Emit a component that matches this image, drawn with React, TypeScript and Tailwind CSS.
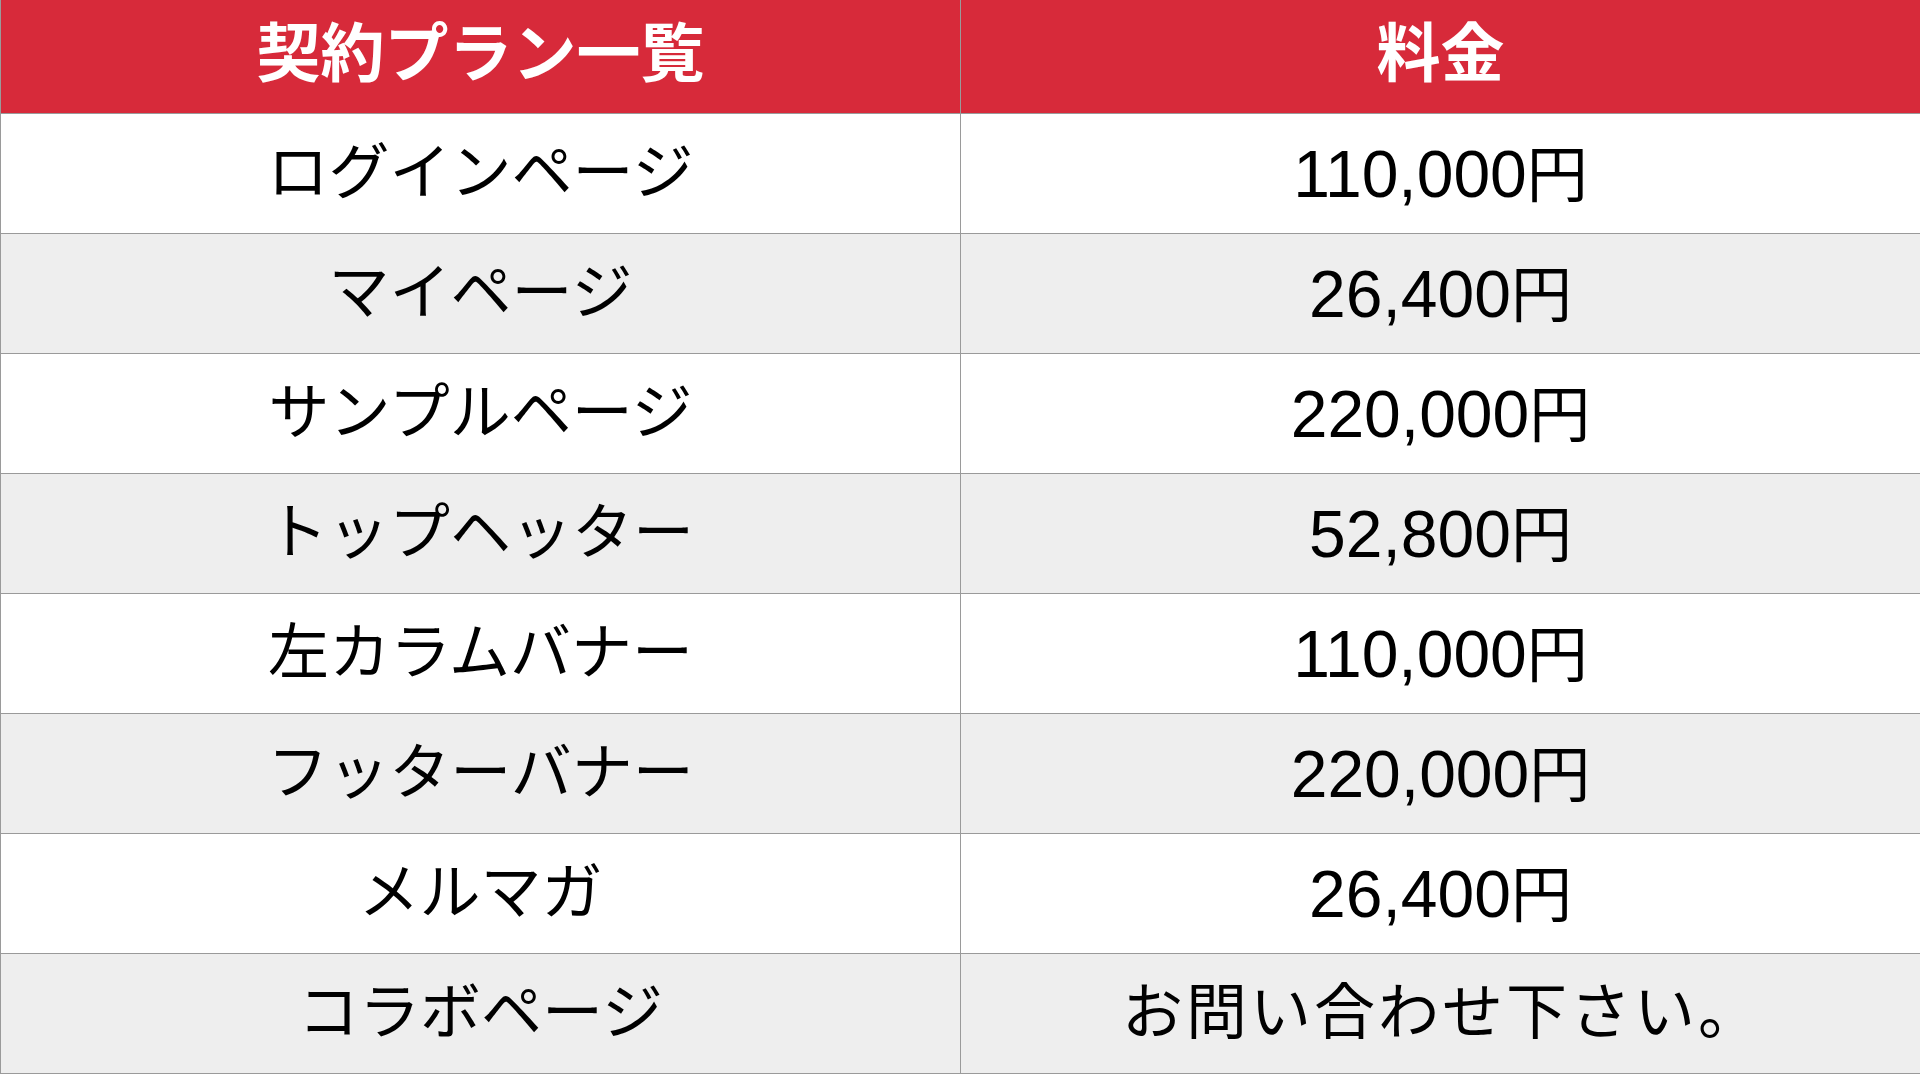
import React from 'react';

const plans = [
  { name: 'ログインページ', price: '110,000' },
  { name: 'マイページ', price: '26,400' },
  { name: 'サンプルページ', price: '220,000' },
  { name: 'トップヘッター', price: '52,800' },
  { name: '左カラムバナー', price: '110,000' },
  { name: 'フッターバナー', price: '220,000' },
  { name: 'メルマガ', price: '26,400' },
  { name: 'コラボページ', price: null },
];

const App: React.FC = () => {
  return (
    <div className="w-[1920px] h-[1080px] bg-white font-[family-name:'Liberation_Sans','Noto_Sans_CJK_JP',sans-serif]">
      <div className="border-l border-[#9a9a9a]">
        <div className="grid grid-cols-[959px_1fr] h-[114px] bg-[#d72a3a] border-b border-[#9a9a9a] text-white font-bold text-[64px] leading-none">
          <div className="flex items-center justify-center pb-[6px]">契約プラン一覧</div>
          <div className="flex items-center justify-center pb-[6px] border-l border-[#9a9a9a]">料金</div>
        </div>
        {plans.map((item, index) => (
          <div
            key={index}
            className={`grid grid-cols-[959px_1fr] h-[120px] border-b border-[#9a9a9a] text-black text-[61px] leading-none ${
              index % 2 === 1 ? 'bg-[#eeeeee]' : 'bg-white'
            }`}>
            <div className="flex items-center justify-center">{item.name}</div>
            <div className="flex items-center justify-center border-l border-[#9a9a9a]">
              {item.price ? (
                <span>
                  <span className="text-[66px]">{item.price}</span>円
                </span>
              ) : (
                <span className="tracking-[3px] pl-[3px]">お問い合わせ下さい。</span>
              )}
            </div>
          </div>
        ))}
      </div>
    </div>
  );
};

export default App;
